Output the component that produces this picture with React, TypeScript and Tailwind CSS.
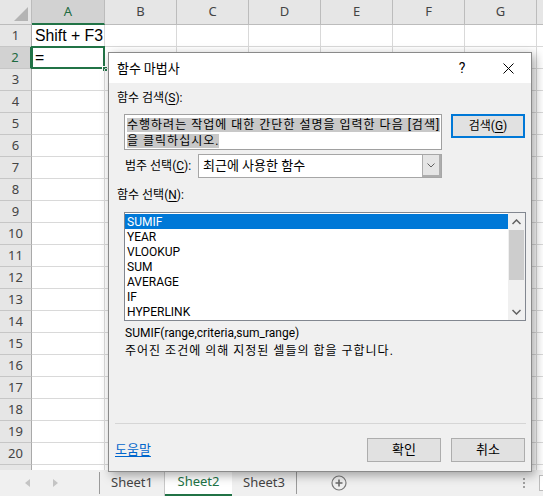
import React from "react";

const UI = "Roboto, 'Noto Sans CJK KR', sans-serif";
const KR = "'Noto Sans CJK KR', 'Noto Sans', sans-serif";

const cols = [
  { l: "A", w: 73 },
  { l: "B", w: 72 },
  { l: "C", w: 72 },
  { l: "D", w: 72 },
  { l: "E", w: 72 },
  { l: "F", w: 72 },
  { l: "G", w: 72 },
  { l: "", w: 40 },
];

const rows = Array.from({ length: 21 }, (_, i) => i + 1);

function Grid() {
  return (
    <div className="flex flex-col h-[470px] overflow-hidden bg-white" style={{ fontFamily: "'Noto Sans', sans-serif" }}>
      <div className="flex h-[25px] flex-none">
        <div className="relative w-[32px] flex-none bg-[#e6e6e6] border-r border-b border-[#bcbcbc]">
          <svg className="absolute right-[3px] bottom-[3px]" width="14" height="14" viewBox="0 0 14 14">
            <polygon points="14,0 14,14 0,14" fill="#b4b4b4" />
          </svg>
        </div>
        {cols.map((c, i) => (
          <div
            key={i}
            style={{ width: c.w }}
            className={
              "flex-none flex items-center justify-center text-[13px] border-r " +
              (i === 0
                ? "bg-[#d2d2d2] text-[#1e6b41] border-b-2 border-b-[#217346] border-r-[#bcbcbc]"
                : "bg-[#e6e6e6] text-[#444] border-b border-[#bcbcbc]")
            }
          >
            {c.l}
          </div>
        ))}
      </div>
      {rows.map((r) => (
        <div key={r} className="flex h-[22px] flex-none">
          <div
            className={
              "w-[32px] flex-none flex items-center justify-center text-[13px] border-b border-b-[#c6c6c6] " +
              (r === 2
                ? "bg-[#d2d2d2] text-[#1e6b41] border-r-2 border-r-[#217346]"
                : "bg-[#e6e6e6] text-[#444] border-r border-r-[#a9a9a9]")
            }
          >
            {r <= 20 ? r : ""}
          </div>
          {cols.map((c, i) => (
            <div
              key={i}
              style={{ width: c.w }}
              className="relative flex-none border-r border-b border-[#d9d9d9] flex items-center"
            >
              {r === 1 && i === 0 && (
                <span className="pl-[3px] text-[15.8px] leading-[20px] text-black whitespace-nowrap" style={{ fontFamily: "'Liberation Sans', sans-serif" }}>
                  Shift + F3
                </span>
              )}
              {r === 2 && i === 0 && (
                <>
                  <div className="absolute left-[-1px] top-[-1px] right-[-1px] bottom-[-1px] border-2 border-[#217346]" />
                  <div className="absolute right-[-4px] bottom-[-4px] w-[6px] h-[6px] bg-[#217346] border border-white" />
                  <span className="pl-[3px] text-[15.8px] leading-[20px] text-black" style={{ fontFamily: "'Liberation Sans', sans-serif" }}>=</span>
                </>
              )}
            </div>
          ))}
        </div>
      ))}
    </div>
  );
}

function TabBar() {
  return (
    <div className="flex h-[26px] flex-none bg-[#f0f0f0] items-stretch text-[13px] text-[#444]" style={{ fontFamily: "'Noto Sans', sans-serif" }}>
      <div className="w-[100px] flex-none flex items-center border-r border-[#9a9a9a] my-[2px]">
        <svg className="ml-[25px]" width="6" height="8" viewBox="0 0 6 8">
          <polygon points="5,0 5,8 0,4" fill="#c4c4c4" />
        </svg>
        <svg className="ml-[22px]" width="6" height="8" viewBox="0 0 6 8">
          <polygon points="0,0 0,8 5,4" fill="#c4c4c4" />
        </svg>
      </div>
      <div className="w-[65px] flex-none flex items-center justify-center border-r border-[#c8c8c8]">Sheet1</div>
      <div className="w-[67px] flex-none flex items-center justify-center bg-white text-[#217346] border-b-2 border-[#217346]">Sheet2</div>
      <div className="w-[65px] flex-none flex items-center justify-center border-r border-[#9a9a9a] my-[2px]">Sheet3</div>
      <div className="w-[83px] flex-none flex items-center justify-center">
        <svg width="16" height="16" viewBox="0 0 16 16">
          <circle cx="8" cy="8" r="7" fill="none" stroke="#7a7a7a" strokeWidth="1.2" />
          <path d="M8 4.5v7M4.5 8h7" stroke="#6a6a6a" strokeWidth="1.6" />
        </svg>
      </div>
      <div className="flex-1" />
      <div className="w-[6px] flex-none flex flex-col items-center justify-center gap-[2px] mr-[12px]">
        <div className="w-[2px] h-[2px] bg-[#a0a0a0]" />
        <div className="w-[2px] h-[2px] bg-[#a0a0a0]" />
        <div className="w-[2px] h-[2px] bg-[#a0a0a0]" />
      </div>
      <div className="w-[4px] flex-none bg-white border-l border-t border-b border-[#bcbcbc] my-[5px]" />
    </div>
  );
}

function U({ c }: { c: string }) {
  return <span className="underline underline-offset-2">{c}</span>;
}

const items = ["SUMIF", "YEAR", "VLOOKUP", "SUM", "AVERAGE", "IF", "HYPERLINK"];

function Dialog() {
  return (
    <div
      className="absolute left-[108px] top-[52px] w-[424px] h-[420px] flex flex-col border border-[#8a8a8a] bg-[#f0f0f0] shadow-[3px_3px_10px_rgba(0,0,0,0.35)] text-[12px] text-black"
      style={{ fontFamily: UI }}
    >
      <div className="h-[30px] flex-none bg-white flex items-center">
        <div className="flex-1 pl-[8px] text-[13px]" style={{ fontFamily: KR }}>함수 마법사</div>
        <div className="w-[46px] flex items-center justify-center text-[14px]">?</div>
        <div className="w-[46px] flex items-center justify-center">
          <svg width="11" height="11" viewBox="0 0 11 11">
            <path d="M0.5 0.5L10.5 10.5M10.5 0.5L0.5 10.5" stroke="#000" strokeWidth="1" />
          </svg>
        </div>
      </div>
      <div className="flex-1 flex flex-col pl-[8px]">
        <div className="mt-[7px] h-[16px] leading-[16px]">
          함수 검색(<U c="S" />):
        </div>
        <div className="mt-[8px] flex h-[36px]">
          <div className="ml-[7px] w-[318px] h-[36px] bg-white border border-[#a0a0a0] pl-[2px] pt-[2px] leading-[16px] tracking-[1px] whitespace-nowrap overflow-hidden">
            <span className="bg-[#c8c8c8]">
              수행하려는 작업에 대한 간단한 설명을 입력한 다음 [검색]
              <br />을 클릭하십시오.
            </span>
          </div>
          <div className="ml-[9px] w-[74px] h-[24px] bg-[#e1e1e1] border-2 border-[#0078d7] flex items-center justify-center">
            검색(<U c="G" />)
          </div>
        </div>
        <div className="mt-[4px] flex h-[24px] items-center">
          <div className="w-[81px] flex-none pl-[8px] whitespace-nowrap">
            범주 선택(<U c="C" />):
          </div>
          <div className="w-[244px] h-[24px] flex bg-white border border-[#a6a6a6]">
            <div className="flex-1 flex items-center pl-[4px] text-[13px]">최근에 사용한 함수</div>
            <div className="w-[19px] flex-none bg-[#e5e5e5] border-2 border-l border-[#adadad] border-t-0 border-l-[#adadad] flex items-center justify-center">
              <svg width="8" height="5" viewBox="0 0 8 5">
                <path d="M0.5 0.5L4 4L7.5 0.5" fill="none" stroke="#606060" strokeWidth="1" />
              </svg>
            </div>
          </div>
        </div>
        <div className="mt-[9px] h-[16px] leading-[16px]">
          함수 선택(<U c="N" />):
        </div>
        <div className="mt-[9px] ml-[7px] w-[402px] h-[109px] flex-none bg-white border border-[#828790] flex">
          <div className="flex-1 pt-[1px]">
            {items.map((it, i) => (
              <div
                key={it}
                className={
                  "h-[15px] flex items-center overflow-hidden leading-[14px] pl-[2px] " + (i === 0 ? "bg-[#0078d7] text-white" : "")
                }
              >
                {it}
              </div>
            ))}
          </div>
          <div className="w-[17px] flex-none flex flex-col bg-[#f0f0f0]">
            <div className="h-[17px] flex items-center justify-center">
              <svg width="9" height="6" viewBox="0 0 9 6">
                <path d="M0.5 5L4.5 1L8.5 5" fill="none" stroke="#606060" strokeWidth="1.5" />
              </svg>
            </div>
            <div className="h-[50px] mx-[1px] bg-[#cdcdcd]" />
            <div className="flex-1" />
            <div className="h-[17px] flex items-center justify-center">
              <svg width="9" height="6" viewBox="0 0 9 6">
                <path d="M0.5 1L4.5 5L8.5 1" fill="none" stroke="#606060" strokeWidth="1.5" />
              </svg>
            </div>
          </div>
        </div>
        <div className="mt-[4px] ml-[8px] h-[16px] leading-[16px]">SUMIF(range,criteria,sum_range)</div>
        <div className="mt-[2px] ml-[8px] h-[16px] leading-[16px] tracking-[1px]">주어진 조건에 의해 지정된 셀들의 합을 구합니다.</div>
        <div className="flex-1" />
        <div className="h-[1px] ml-[-2px] mr-[5px] bg-[#d6d6d6]" />
        <div className="mt-[14px] mb-[9px] h-[24px] flex items-center">
          <div className="ml-[-2px] text-[#0066cc] underline underline-offset-2 text-[13px]">도움말</div>
          <div className="flex-1" />
          <div className="w-[74px] h-[24px] bg-[#e1e1e1] border border-[#adadad] flex items-center justify-center text-[13px]">확인</div>
          <div className="ml-[10px] mr-[6px] w-[74px] h-[24px] bg-[#e1e1e1] border border-[#adadad] flex items-center justify-center text-[13px]">취소</div>
        </div>
      </div>
    </div>
  );
}

export default function App() {
  return (
    <div className="relative w-[543px] h-[496px] overflow-hidden bg-white flex flex-col" style={{ fontFamily: UI }}>
      <Grid />
      <TabBar />
      <Dialog />
    </div>
  );
}
